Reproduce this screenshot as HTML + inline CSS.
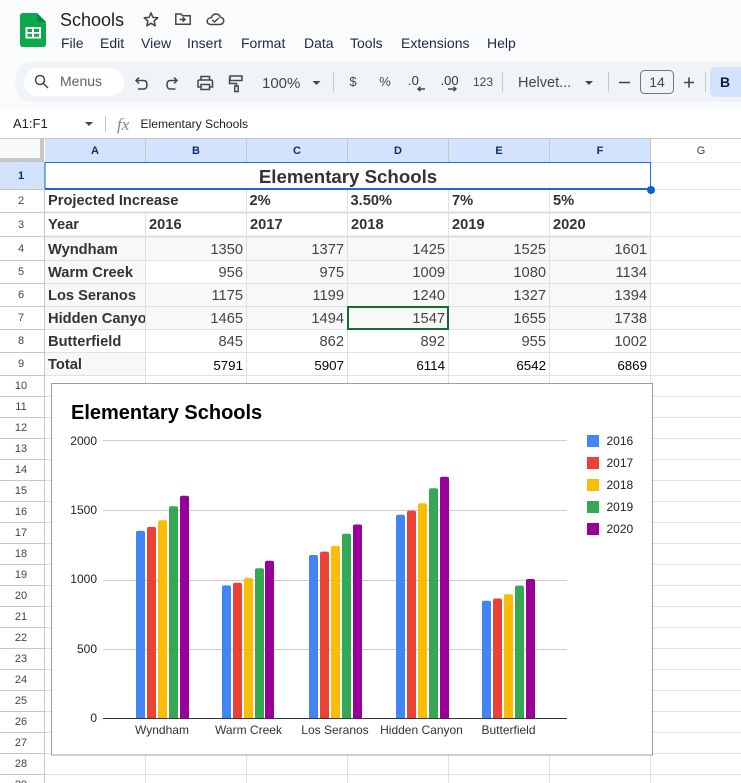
<!DOCTYPE html>
<html><head><meta charset="utf-8"><title>Schools</title>
<style>
html,body{margin:0;padding:0;width:741px;height:783px;overflow:hidden;background:#fff}
svg{display:block;font-family:"Liberation Sans",Arial,sans-serif}
.m{font-size:14px;fill:#1f2a3a}
.t{font-size:14px;fill:#444746}
.rh{font-size:11px;fill:#444;text-anchor:middle}
.ch{font-size:11px;font-weight:bold;fill:#0b2f6e;text-anchor:middle}
.b{font-size:14.67px;font-weight:bold;fill:#333}
.n{font-size:14.67px;fill:#444;text-anchor:end}
.k{font-size:13.33px;fill:#000;text-anchor:end}
.ax{font-size:12px;fill:#222;text-anchor:end}
.cat{font-size:12px;fill:#333;text-anchor:middle}
.lg{font-size:12px;fill:#222}
.i{fill:none;stroke:#444746;stroke-width:1.5}
</style></head><body>
<svg width="741" height="783" viewBox="0 0 741 783" xmlns="http://www.w3.org/2000/svg">
<defs>
<clipPath id="ca"><rect x="45" y="300" width="100" height="30"/></clipPath>
<clipPath id="pl"><rect x="100" y="430" width="470" height="288"/></clipPath>
</defs>
<rect width="741" height="110" fill="#f9fbfd"/>

<!-- logo -->
<path d="M23 13H37L46 22V44Q46 47 43 47H23Q20 47 20 44V16Q20 13 23 13Z" fill="#0ca94c"/>
<path d="M37 13L46 22H39Q37 22 37 20Z" fill="#0a8a3e"/>
<path d="M25.5 27H41V38.5H25.5Z M27.5 29V32H32V29Z M34 29V32H39V29Z M27.5 33.8V36.7H32V33.8Z M34 33.8V36.7H39V33.8Z" fill="#fff" fill-rule="evenodd"/>

<text x="60" y="26" font-size="18" fill="#1f1f1f">Schools</text>
<path class="i" stroke-linejoin="round" d="M151 12.8L152.9 17.4L157.8 17.8L154.1 21L155.2 25.8L151 23.2L146.8 25.8L147.9 21L144.2 17.8L149.1 17.4Z"/>
<path class="i" d="M175.8 24.2V14H181L182.6 15.8H190.2V24.2Z"/>
<path d="M179.5 19.5H184.5M182.6 17.3L185 19.5L182.6 21.7" fill="none" stroke="#444746" stroke-width="1.5"/>
<path class="i" d="M211 24.5H219.5C225 24.5 225 17.5 220.2 17.2C218.8 12.8 212.8 13 211.5 17.5C206 18 205.5 24.5 211 24.5Z"/>
<path d="M212.2 19.8L214.6 22L218.6 18" fill="none" stroke="#444746" stroke-width="1.4"/>

<text class="m" x="61" y="48">File</text>
<text class="m" x="100" y="48">Edit</text>
<text class="m" x="141" y="48">View</text>
<text class="m" x="187" y="48">Insert</text>
<text class="m" x="241" y="48">Format</text>
<text class="m" x="304" y="48">Data</text>
<text class="m" x="350" y="48">Tools</text>
<text class="m" x="401" y="48">Extensions</text>
<text class="m" x="487" y="48">Help</text>

<!-- toolbar -->
<path d="M35 62H741V102H35Q15 102 15 82Q15 62 35 62Z" fill="#f0f4f9"/>
<rect x="24" y="68" width="100" height="28" rx="14" fill="#fff"/>
<circle cx="40" cy="80" r="4.5" class="i"/>
<path d="M43.3 83.3L48 88" class="i"/>
<text x="60" y="86" font-size="14" fill="#5f6368">Menus</text>

<path class="i" d="M139 77.5L136 80.5L139 83.5M136 80.5H143.5Q147 80.5 147 84.7Q147 89 143.5 89H138"/>
<path class="i" d="M174 77.5L177 80.5L174 83.5M177 80.5H170.5Q167 80.5 167 84.7Q167 89 170.5 89H175.5"/>
<path class="i" d="M201 80V76.5H209.5V80M201 87H198V81.5Q198 80 199.5 80H211Q212.5 80 212.5 81.5V87H209.5M201 84.5H209.5V89.5H201Z"/>
<path class="i" d="M230 76H242V80.5H230ZM230 78H229.5V83.5H236.5V86"/>
<rect x="234.8" y="86" width="3.4" height="5.5" class="i"/>
<text class="t" x="262" y="88" style="font-size:15px">100%</text>
<path d="M312.5 81H320.5L316.5 85Z" fill="#444746"/>
<path d="M333.5 72V92M502.5 72V92M608.5 72V92M705.5 72V92" stroke="#c7c7c7"/>
<text x="353" y="86" font-size="13" fill="#444746" text-anchor="middle">$</text>
<text x="385" y="86" font-size="13" fill="#444746" text-anchor="middle">%</text>
<text x="408" y="85" font-size="13" fill="#333">.0</text>
<path d="M425 89H418M420.5 86.8L418 89L420.5 91.2" fill="none" stroke="#444746" stroke-width="1.4"/>
<text x="440.5" y="85" font-size="13" fill="#333">.00</text>
<path d="M448 89H456M453.5 86.8L456 89L453.5 91.2" fill="none" stroke="#444746" stroke-width="1.4"/>
<text x="473" y="86" font-size="12" fill="#444746">123</text>
<text x="518" y="87" style="font-size:14.5px" fill="#444746">Helvet...</text>
<path d="M585 81H593L589 85Z" fill="#444746"/>
<path d="M619 82.5H630M684 82.5H694M689 77.5V87.5" stroke="#444746" stroke-width="1.6"/>
<rect x="640.5" y="70.5" width="33" height="23" rx="4" fill="none" stroke="#747775"/>
<text x="657" y="87" font-size="14" fill="#444746" text-anchor="middle">14</text>
<path d="M716 67H741V97H716Q710 97 710 91V73Q710 67 716 67Z" fill="#d3e3fd"/>
<text x="725" y="87" font-size="14" font-weight="bold" fill="#041e49" text-anchor="middle">B</text>

<!-- name box / formula -->
<rect y="110" width="741" height="29" fill="#fff"/>
<text x="13" y="128" font-size="13" fill="#1f1f1f">A1:F1</text>
<path d="M85 122H93L89 126Z" fill="#444746"/>
<path d="M105.5 116V132" stroke="#c7c7c7"/>
<text x="117" y="130" font-size="17" font-style="italic" font-family="Liberation Serif" fill="#80868b">fx</text>
<text x="140.5" y="128" style="font-size:12.1px" fill="#1f1f1f">Elementary Schools</text>

<!-- fills -->
<rect x="0" y="139" width="40" height="19" fill="#f8f9fa"/>
<path d="M40 139H44V158H40Z M0 158H44V162H0Z" fill="#c7c7c7"/>
<rect x="45" y="139" width="605" height="23" fill="#d3e3fd"/>
<rect x="0" y="162" width="44" height="27" fill="#d3e3fd"/>
<rect x="45" y="237" width="605" height="92" fill="#f8f8f8"/>
<rect x="146" y="261" width="100" height="22" fill="#fff"/>
<rect x="45" y="353" width="100" height="22" fill="#f8f8f8"/>

<!-- grid -->
<g stroke="#e1e1e1" fill="none">
<path d="M45 189.5H741M45 260.5H741M45 283.5H741M45 306.5H741M45 329.5H741M45 352.5H741M45 375.5H741M45 396.5H741M45 417.5H741M45 438.5H741M45 459.5H741M45 480.5H741M45 501.5H741M45 522.5H741M45 543.5H741M45 564.5H741M45 585.5H741M45 606.5H741M45 627.5H741M45 648.5H741M45 669.5H741M45 690.5H741M45 711.5H741M45 732.5H741M45 753.5H741M45 774.5H741M651 162.5H741M651 212.5H741M651 236.5H741"/>
<path d="M145.5 213V783M246.5 189V783M347.5 189V783M448.5 189V783M549.5 189V783M650.5 162V783"/>
<path d="M45 212.5H650M45 236.5H650" stroke="#dcdcdc" stroke-width="2"/>
</g>
<g stroke="#c7c7c7" fill="none">
<path d="M0 138.5H741"/>
<path d="M145.5 139V162M246.5 139V162M347.5 139V162M448.5 139V162M549.5 139V162M650.5 139V162"/>
<path d="M45 162.5H650"/>
<path d="M44.5 162V783"/>
<path d="M0 189.5H44M0 212.5H44M0 236.5H44M0 260.5H44M0 283.5H44M0 306.5H44M0 329.5H44M0 352.5H44M0 375.5H44M0 396.5H44M0 417.5H44M0 438.5H44M0 459.5H44M0 480.5H44M0 501.5H44M0 522.5H44M0 543.5H44M0 564.5H44M0 585.5H44M0 606.5H44M0 627.5H44M0 648.5H44M0 669.5H44M0 690.5H44M0 711.5H44M0 732.5H44M0 753.5H44M0 774.5H44"/>
</g>

<!-- column headers -->
<text class="ch" x="95" y="154">A</text><text class="ch" x="196" y="154">B</text><text class="ch" x="297" y="154">C</text><text class="ch" x="398" y="154">D</text><text class="ch" x="499" y="154">E</text><text class="ch" x="600" y="154">F</text>
<text class="rh" x="701" y="154">G</text>
<!-- row headers -->
<text class="ch" x="21" y="179">1</text>
<text class="rh" x="21" y="204">2</text><text class="rh" x="21" y="228">3</text><text class="rh" x="21" y="252">4</text><text class="rh" x="21" y="275">5</text><text class="rh" x="21" y="298">6</text><text class="rh" x="21" y="321">7</text><text class="rh" x="21" y="344">8</text><text class="rh" x="21" y="367">9</text>
<text class="rh" x="21" y="389">10</text><text class="rh" x="21" y="410">11</text><text class="rh" x="21" y="431">12</text><text class="rh" x="21" y="452">13</text><text class="rh" x="21" y="473">14</text><text class="rh" x="21" y="494">15</text><text class="rh" x="21" y="515">16</text><text class="rh" x="21" y="536">17</text><text class="rh" x="21" y="557">18</text><text class="rh" x="21" y="578">19</text><text class="rh" x="21" y="599">20</text><text class="rh" x="21" y="620">21</text><text class="rh" x="21" y="641">22</text><text class="rh" x="21" y="662">23</text><text class="rh" x="21" y="683">24</text><text class="rh" x="21" y="704">25</text><text class="rh" x="21" y="725">26</text><text class="rh" x="21" y="746">27</text><text class="rh" x="21" y="767">28</text><text class="rh" x="21" y="788">29</text>

<!-- cells -->
<text x="348" y="183" style="font-size:18.67px" font-weight="bold" fill="#333" text-anchor="middle">Elementary Schools</text>
<text class="b" x="48" y="205">Projected Increase</text><text class="b" x="249.5" y="205">2%</text><text class="b" x="350.5" y="205">3.50%</text><text class="b" x="452" y="205">7%</text><text class="b" x="553" y="205">5%</text>
<text class="b" x="48" y="229">Year</text><text class="b" x="149" y="229">2016</text><text class="b" x="250" y="229">2017</text><text class="b" x="351" y="229">2018</text><text class="b" x="452" y="229">2019</text><text class="b" x="553" y="229">2020</text>
<text class="b" x="48" y="254">Wyndham</text><text class="n" x="243" y="254">1350</text><text class="n" x="344" y="254">1377</text><text class="n" x="445" y="254">1425</text><text class="n" x="546" y="254">1525</text><text class="n" x="647" y="254">1601</text>
<text class="b" x="48" y="277">Warm Creek</text><text class="n" x="243" y="277">956</text><text class="n" x="344" y="277">975</text><text class="n" x="445" y="277">1009</text><text class="n" x="546" y="277">1080</text><text class="n" x="647" y="277">1134</text>
<text class="b" x="48" y="300">Los Seranos</text><text class="n" x="243" y="300">1175</text><text class="n" x="344" y="300">1199</text><text class="n" x="445" y="300">1240</text><text class="n" x="546" y="300">1327</text><text class="n" x="647" y="300">1394</text>
<text class="b" x="48" y="323" clip-path="url(#ca)">Hidden Canyon</text><text class="n" x="243" y="323">1465</text><text class="n" x="344" y="323">1494</text><text class="n" x="445" y="323">1547</text><text class="n" x="546" y="323">1655</text><text class="n" x="647" y="323">1738</text>
<text class="b" x="48" y="346">Butterfield</text><text class="n" x="243" y="346">845</text><text class="n" x="344" y="346">862</text><text class="n" x="445" y="346">892</text><text class="n" x="546" y="346">955</text><text class="n" x="647" y="346">1002</text>
<text class="b" x="48" y="369">Total</text><text class="k" x="243" y="370">5791</text><text class="k" x="344" y="370">5907</text><text class="k" x="445" y="370">6114</text><text class="k" x="546" y="370">6542</text><text class="k" x="647" y="370">6869</text>

<!-- selection -->
<path d="M45 162.5H650.5V188.5H45Z" fill="none" stroke="#1a73e8" stroke-width="1"/>
<path d="M45 189H650" stroke="#1a66e0" stroke-width="2"/>
<circle cx="651" cy="190" r="4" fill="#0b5fd8"/>
<rect x="348" y="307" width="100" height="22" fill="none" stroke="#146c2e" stroke-width="2"/>

<!-- chart -->
<rect x="51.5" y="383.5" width="601" height="371.5" fill="#fff" stroke="#9e9e9e"/>
<text x="71" y="419" font-size="20" font-weight="bold" fill="#000">Elementary Schools</text>
<path d="M103 440.5H567M103 510.5H567M103 580.5H567M103 649.5H567" stroke="#ccc"/>
<text class="ax" x="97" y="445">2000</text><text class="ax" x="97" y="514">1500</text><text class="ax" x="97" y="583">1000</text><text class="ax" x="97" y="653">500</text><text class="ax" x="97" y="722">0</text>
<g clip-path="url(#pl)">
<g fill="#4285f4"><rect x="136" y="530.7" width="9" height="200" rx="2"/><rect x="222" y="585.4" width="9" height="200" rx="2"/><rect x="309" y="555" width="9" height="200" rx="2"/><rect x="396" y="514.7" width="9" height="250" rx="2"/><rect x="482" y="600.8" width="9" height="200" rx="2"/></g>
<g fill="#ea4335"><rect x="147" y="526.9" width="9" height="200" rx="2"/><rect x="233" y="582.8" width="9" height="200" rx="2"/><rect x="320" y="551.6" width="9" height="200" rx="2"/><rect x="407" y="510.6" width="9" height="250" rx="2"/><rect x="493" y="598.5" width="9" height="200" rx="2"/></g>
<g fill="#fbbc04"><rect x="158" y="520.2" width="9" height="200" rx="2"/><rect x="244" y="578" width="9" height="200" rx="2"/><rect x="331" y="545.9" width="9" height="200" rx="2"/><rect x="418" y="503.3" width="9" height="250" rx="2"/><rect x="504" y="594.3" width="9" height="200" rx="2"/></g>
<g fill="#34a853"><rect x="169" y="506.3" width="9" height="250" rx="2"/><rect x="255" y="568.2" width="9" height="200" rx="2"/><rect x="342" y="533.8" width="9" height="200" rx="2"/><rect x="429" y="488.3" width="9" height="250" rx="2"/><rect x="515" y="585.6" width="9" height="200" rx="2"/></g>
<g fill="#990099"><rect x="180" y="495.8" width="9" height="250" rx="2"/><rect x="265" y="560.7" width="9" height="200" rx="2"/><rect x="353" y="524.5" width="9" height="200" rx="2"/><rect x="440" y="476.7" width="9" height="250" rx="2"/><rect x="526" y="579" width="9" height="200" rx="2"/></g>
</g>
<path d="M103 718.5H567" stroke="#333"/>
<text class="cat" x="162" y="734">Wyndham</text><text class="cat" x="248.5" y="734">Warm Creek</text><text class="cat" x="335" y="734">Los Seranos</text><text class="cat" x="421.5" y="734">Hidden Canyon</text><text class="cat" x="508.5" y="734">Butterfield</text>
<rect x="587" y="435" width="12" height="12" fill="#4285f4"/><text class="lg" x="606.5" y="445">2016</text>
<rect x="587" y="457" width="12" height="12" fill="#ea4335"/><text class="lg" x="606.5" y="467">2017</text>
<rect x="587" y="479" width="12" height="12" fill="#fbbc04"/><text class="lg" x="606.5" y="489">2018</text>
<rect x="587" y="501" width="12" height="12" fill="#34a853"/><text class="lg" x="606.5" y="511">2019</text>
<rect x="587" y="523" width="12" height="12" fill="#990099"/><text class="lg" x="606.5" y="533">2020</text>
</svg>
</body></html>
